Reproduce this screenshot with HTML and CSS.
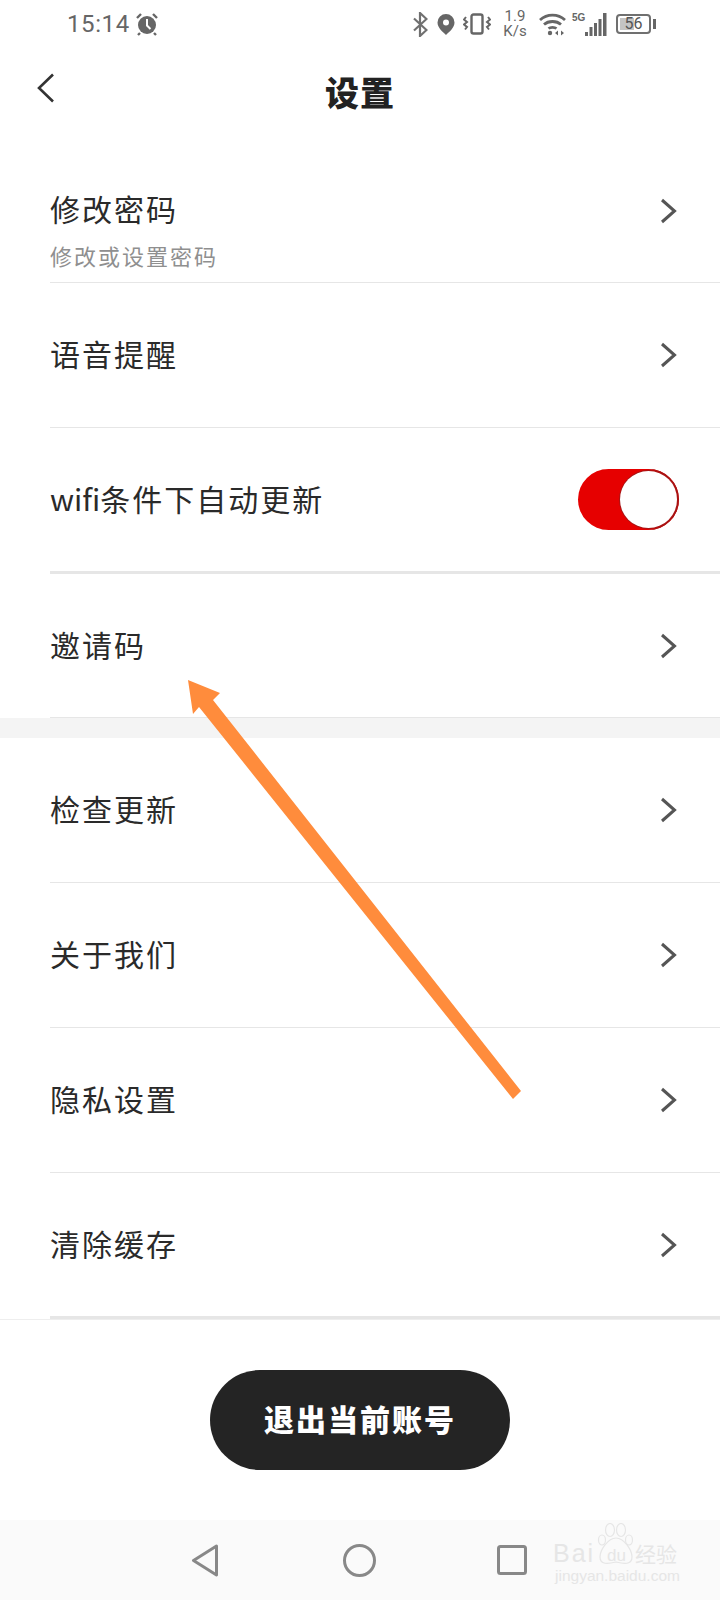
FILE: index.html
```html
<!DOCTYPE html>
<html lang="zh-CN">
<head>
<meta charset="utf-8">
<title>设置</title>
<link rel="stylesheet" href="styles.css">
</head>
<body>
<div class="page">
  <div class="status">
    <span class="time">15:14</span>
    <svg class="alarm" width="24" height="24" viewBox="0 0 24 24"><circle cx="12" cy="13" r="9" fill="#666"/><path d="M12 7v6.500l3.500 3.500" fill="none" stroke="#fff" stroke-width="2"/><path d="M2 6l4-4M22 6l-4-4M5 21l-2 2M19 21l2 2" stroke="#666" stroke-width="2.400" fill="none"/></svg>
    <span class="status-gap"></span>
    <svg class="bt" width="15" height="25" viewBox="0 0 15 25"><path d="M1 6.500l12.500 11.500-6.500 6V1l6.500 6L1 18.500" fill="none" stroke="#707070" stroke-width="2.200"/></svg>
    <svg class="pin" width="18" height="21" viewBox="0 0 18 21"><path d="M9 0a8.500 8.500 0 0 1 8.500 8.500C17.500 14 12 18 9 21 6 18 .5 14 .5 8.500A8.500 8.500 0 0 1 9 0z" fill="#666"/><circle cx="9" cy="8.500" r="3" fill="#fff"/></svg>
    <svg class="vib" width="28" height="22" viewBox="0 0 28 22"><rect x="8.500" y="1.500" width="11" height="19" rx="2" fill="none" stroke="#666" stroke-width="2.400"/><path d="M3 4l-2 2.500 3 2.500-3 2.500 3 2.500-2 2.500M25 4l2 2.500-3 2.500 3 2.500-3 2.500 2 2.500" fill="none" stroke="#666" stroke-width="2"/></svg>
    <span class="speed"><span>1.9</span><span>K/s</span></span>
    <svg class="wifi" width="27" height="24" viewBox="0 0 27 24"><path d="M1 8C8 1.500 19 1.500 26 8M5 12.500c4.500-4 12.500-4 17 0M9.500 16.500c2-1.600 6-1.600 8 0" fill="none" stroke="#666" stroke-width="2.800"/><circle cx="11" cy="21" r="2.200" fill="#666"/><path d="M16 21l3-2.500v5zM22 18.500l3 2.500-3 2.500z" fill="#666"/></svg>
    <span class="net">5G</span>
    <svg class="signal" width="22" height="23" viewBox="0 0 22 23"><path d="M0 19h3v4H0zM4.500 14h3v9h-3zM9 10h3v13H9zM13.500 6h3v17h-3zM18 0h3.500v23H18z" fill="#666"/></svg>
    <span class="battery"><span class="battery-fill"></span><span class="battery-num">56</span></span>
    <span class="battery-nub"></span>
  </div>

  <header class="header">
    <svg class="back" width="20" height="30" viewBox="0 0 20 30"><path d="M17 1.500L3 15l14 13.500" fill="none" stroke="#333" stroke-width="2.600"/></svg>
    <h1 class="title">设置</h1>
  </header>

  <section class="group">
    <div class="row row-first">
      <div class="row-text">
        <div class="row-title">修改密码</div>
        <div class="row-sub">修改或设置密码</div>
      </div>
      <svg class="chev" width="20" height="26" viewBox="0 0 20 26"><path d="M3 2l12.500 11L3 24" fill="none" stroke="#555" stroke-width="3"/></svg>
    </div>
    <div class="row">
      <div class="row-title">语音提醒</div>
      <svg class="chev" width="20" height="26" viewBox="0 0 20 26"><path d="M3 2l12.500 11L3 24" fill="none" stroke="#555" stroke-width="3"/></svg>
    </div>
    <div class="row row-thick">
      <div class="row-title"><span class="latin">wifi</span>条件下自动更新</div>
      <span class="toggle"><span class="knob"></span></span>
    </div>
    <div class="row row-invite">
      <div class="row-title">邀请码</div>
      <svg class="chev" width="20" height="26" viewBox="0 0 20 26"><path d="M3 2l12.500 11L3 24" fill="none" stroke="#555" stroke-width="3"/></svg>
    </div>
  </section>

  <div class="band"></div>

  <section class="group">
    <div class="row">
      <div class="row-title">检查更新</div>
      <svg class="chev" width="20" height="26" viewBox="0 0 20 26"><path d="M3 2l12.500 11L3 24" fill="none" stroke="#555" stroke-width="3"/></svg>
    </div>
    <div class="row">
      <div class="row-title">关于我们</div>
      <svg class="chev" width="20" height="26" viewBox="0 0 20 26"><path d="M3 2l12.500 11L3 24" fill="none" stroke="#555" stroke-width="3"/></svg>
    </div>
    <div class="row">
      <div class="row-title">隐私设置</div>
      <svg class="chev" width="20" height="26" viewBox="0 0 20 26"><path d="M3 2l12.500 11L3 24" fill="none" stroke="#555" stroke-width="3"/></svg>
    </div>
    <div class="row row-thick">
      <div class="row-title">清除缓存</div>
      <svg class="chev" width="20" height="26" viewBox="0 0 20 26"><path d="M3 2l12.500 11L3 24" fill="none" stroke="#555" stroke-width="3"/></svg>
    </div>
  </section>

  <div class="footer">
    <button class="logout">退出当前账号</button>
  </div>

  <nav class="nav">
    <svg class="nav-back" width="28" height="33" viewBox="0 0 28 33"><path d="M25.500 2L2.500 16.500 25.500 31z" fill="none" stroke="#888" stroke-width="3" stroke-linejoin="round"/></svg>
    <svg class="nav-home" width="33" height="33" viewBox="0 0 33 33"><circle cx="16.500" cy="16.500" r="15" fill="none" stroke="#888" stroke-width="3"/></svg>
    <svg class="nav-square" width="30" height="30" viewBox="0 0 30 30"><rect x="1.500" y="1.500" width="27" height="27" rx="2" fill="none" stroke="#888" stroke-width="3"/></svg>
  </nav>

  <svg class="arrow" width="720" height="1600" viewBox="0 0 720 1600"><path d="M188 680L220 693 213 700 521 1091 513 1099 199 707 193 714z" fill="#ff8c3c"/></svg>

  <div class="mark">
    <svg class="paw" width="38" height="42" viewBox="0 0 38 42"><g fill="none" stroke="#e6e6e6" stroke-width="1.200"><ellipse cx="5" cy="17" rx="3.500" ry="5"/><ellipse cx="13" cy="7" rx="4.500" ry="6.500"/><ellipse cx="24" cy="7" rx="4.500" ry="6.500"/><ellipse cx="32" cy="17" rx="3.500" ry="5"/><path d="M19 15c8 0 16 12 16 19 0 8-8 7-16 5-8 2-16 3-16-5 0-7 8-19 16-19z"/></g></svg>
    <div class="mark-logo"><span class="mark-bai">Bai</span><span class="mark-du">du</span><span class="mark-cn">经验</span></div>
    <div class="mark-url">jingyan.baidu.com</div>
  </div>
</div>
</body>
</html>
```
FILE: styles.css
```css
* { box-sizing: border-box; }
html, body { margin: 0; padding: 0; background: #fff; }
.page {
  position: relative;
  width: 720px;
  height: 1600px;
  overflow: hidden;
  display: flex;
  flex-direction: column;
  background: #fff;
  font-family: "Noto Sans CJK SC", "Noto Sans", sans-serif;
  color: #2a2a2a;
}
.status {
  height: 48px;
  flex: none;
  display: flex;
  align-items: center;
  padding: 0 0 0 67px;
  color: #666;
}
.time { font: 24px/24px Roboto, sans-serif; letter-spacing: .6px; width: 68px; flex: none; }
.status-gap { width: 254px; flex: none; }
.pin { margin-left: 9px; }
.vib { margin-left: 8px; }
.speed {
  display: flex;
  flex-direction: column;
  align-items: center;
  width: 26px;
  margin-left: 11px;
  font: 15px/15px Roboto, sans-serif;
}
.wifi { margin-left: 11px; }
.net { width: 11px; margin-left: 6px; font: bold 10px/10px "Liberation Sans Narrow", "Liberation Sans", sans-serif; align-self: flex-start; margin-top: 13px; }
.signal { margin-left: 2px; }
.battery {
  position: relative;
  width: 35px;
  height: 20px;
  margin-left: 9px;
  border: 2px solid #707070;
  border-radius: 4px;
  display: flex;
  align-items: center;
  justify-content: center;
}
.battery-fill { position: absolute; left: 2px; top: 2px; bottom: 2px; width: 14px; background: #c4c4c4; }
.battery-num { position: relative; font: 16px/16px Roboto, sans-serif; color: #555; }
.battery-nub { width: 3px; height: 10px; margin-left: 2px; background: #666; }

.header {
  height: 92px;
  flex: none;
  position: relative;
  display: flex;
  align-items: center;
  justify-content: center;
  padding-bottom: 4px;
}
.back { position: absolute; left: 36px; top: 25px; }
.title { margin: 0; font-size: 34px; line-height: 44px; font-weight: 900; letter-spacing: 1px; color: #222; }

.group { flex: none; }
.row {
  height: 145px;
  margin-left: 50px;
  padding-right: 41px;
  display: flex;
  align-items: center;
  justify-content: space-between;
  border-bottom: 1.500px solid #e6e6e6;
}
.row-first { height: 143px; }
.row-thick { border-bottom: 3px solid #e6e6e6; height: 146px; }
.row-invite { height: 144px; border-bottom-width: 1px; }
.row-text { padding-top: 35px; }
.row-title { font-size: 30px; line-height: 40px; letter-spacing: 2px; color: #2a2a2a; margin-bottom: 4px; }
.latin { letter-spacing: 0; }
.row-sub { margin-top: 12px; font-size: 22px; line-height: 30px; letter-spacing: 2px; color: #8f8f8f; }
.chev { flex: none; }

.toggle {
  width: 101px;
  height: 61px;
  flex: none;
  border-radius: 31px;
  background: #e60000;
  position: relative;
  display: flex;
  align-items: center;
  justify-content: flex-end;
  padding-right: 2px;
  box-shadow: inset -3px 0 0 #a81414;
}
.knob { width: 57px; height: 57px; border-radius: 50%; background: #fff; box-shadow: 0 0 0 1px #a81414; }

.band { height: 20px; flex: none; background: #f4f4f4; }

.footer { flex: 1; display: flex; align-items: center; justify-content: center; box-shadow: inset 0 1px 0 #eee; }
.logout {
  width: 300px;
  height: 100px;
  border: 0;
  border-radius: 50px;
  background: #242424;
  color: #fff;
  font-family: inherit;
  font-size: 30px;
  font-weight: 900;
  letter-spacing: 2px;
  padding: 0 0 4px;
}

.nav {
  height: 80px;
  flex: none;
  background: #fafafa;
  display: flex;
  align-items: center;
  padding-left: 191px;
}
.nav-back { margin-right: 124px; }
.nav-home { margin-right: 121px; }

.arrow { position: absolute; left: 0; top: 0; pointer-events: none; }

.mark {
  position: absolute;
  left: 553px;
  top: 1523px;
  width: 130px;
  height: 62px;
  color: #e6e6e6;
  font-family: "Liberation Sans", "Noto Sans CJK SC", sans-serif;
}
.paw { position: absolute; left: 44px; top: 0; }
.mark-logo {
  position: absolute;
  left: 0;
  top: 18px;
  display: flex;
  align-items: center;
  height: 24px;
  white-space: nowrap;
}
.mark-bai { width: 44px; font-size: 25px; line-height: 24px; letter-spacing: 2px; font-weight: 400; }
.mark-du { width: 38px; padding: 6px 0 0 10px; font-size: 17px; line-height: 18px; }
.mark-cn { width: 44px; font-size: 21px; line-height: 24px; font-family: "Noto Sans CJK SC", sans-serif; }
.mark-url {
  position: absolute;
  left: 2px;
  top: 45px;
  font-size: 15.500px;
  line-height: 16px;
  white-space: nowrap;
}
```
